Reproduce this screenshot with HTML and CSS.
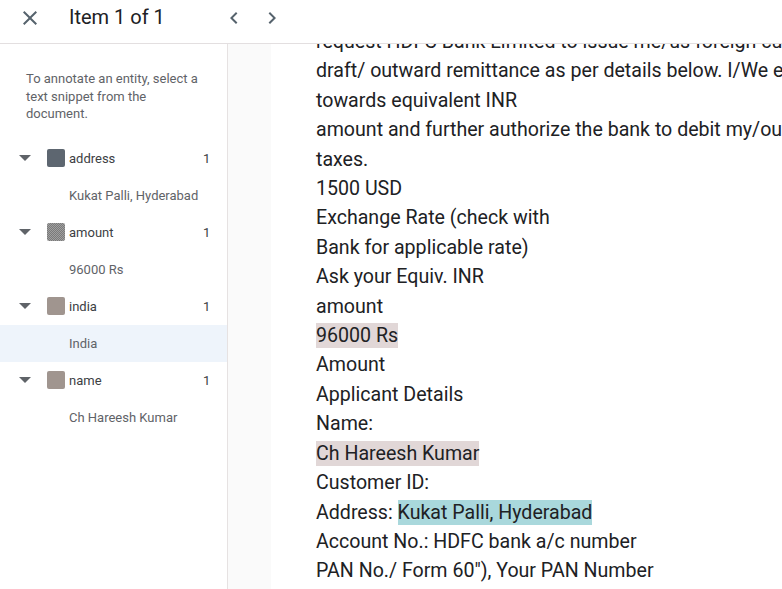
FILE: index.html
```html
<!DOCTYPE html>
<html>
<head>
<meta charset="utf-8">
<link rel="stylesheet" href="styles.css">
</head>
<body>
<div class="app">
  <header class="topbar">
    <svg class="icon close" viewBox="0 0 24 24" width="24" height="24"><path d="M19 6.41L17.59 5 12 10.59 6.41 5 5 6.41 10.59 12 5 17.59 6.41 19 12 13.41 17.59 19 19 17.59 13.41 12z"/></svg>
    <span class="title">Item 1 of 1</span>
    <svg class="icon prev" viewBox="0 0 24 24" width="24" height="24"><path d="M15.41 7.41L14 6l-6 6 6 6 1.41-1.41L10.83 12z"/></svg>
    <svg class="icon next" viewBox="0 0 24 24" width="24" height="24"><path d="M10 6L8.59 7.41 13.17 12l-4.58 4.59L10 18l6-6z"/></svg>
  </header>
  <div class="main">
    <aside class="sidebar">
      <p class="hint">To annotate an entity, select a text snippet from the document.</p>
      <ul class="entities">
        <li class="entity">
          <span class="caret"></span><span class="swatch sw-address"></span><span class="label">address</span><span class="count">1</span>
        </li>
        <li class="value">Kukat Palli, Hyderabad</li>
        <li class="entity">
          <span class="caret"></span><span class="swatch sw-amount"></span><span class="label">amount</span><span class="count">1</span>
        </li>
        <li class="value">96000 Rs</li>
        <li class="entity">
          <span class="caret"></span><span class="swatch sw-india"></span><span class="label">india</span><span class="count">1</span>
        </li>
        <li class="value selected">India</li>
        <li class="entity">
          <span class="caret"></span><span class="swatch sw-name"></span><span class="label">name</span><span class="count">1</span>
        </li>
        <li class="value">Ch Hareesh Kumar</li>
      </ul>
    </aside>
    <div class="gutter"></div>
    <section class="doc">
      <div class="doc-text">
        <div>request HDFC Bank Limited to issue me/us foreign currency demand</div>
        <div>draft/ outward remittance as per details below. I/We enclose a cheque</div>
        <div>towards equivalent INR</div>
        <div>amount and further authorize the bank to debit my/our account for charges and</div>
        <div>taxes.</div>
        <div>1500 USD</div>
        <div>Exchange Rate (check with</div>
        <div>Bank for applicable rate)</div>
        <div>Ask your Equiv. INR</div>
        <div>amount</div>
        <div><span class="hl hl-amount">96000 Rs</span></div>
        <div>Amount</div>
        <div>Applicant Details</div>
        <div>Name:</div>
        <div><span class="hl hl-name">Ch Hareesh Kumar</span></div>
        <div>Customer ID:</div>
        <div>Address: <span class="hl hl-address">Kukat Palli, Hyderabad</span></div>
        <div>Account No.: HDFC bank a/c number</div>
        <div>PAN No./ Form 60"), Your PAN Number</div>
        <div>Date of Birth</div>
      </div>
    </section>
  </div>
</div>
</body>
</html>
```

FILE: styles.css
```css
* { box-sizing: border-box; }
html, body { margin: 0; padding: 0; height: 100%; }
body {
  font-family: Roboto, "Noto Sans", Arial, sans-serif;
  color: #202124;
  background: #fff;
  overflow: hidden;
}
.app {
  width: 782px;
  height: 589px;
  display: flex;
  flex-direction: column;
}
.topbar {
  height: 44px;
  flex: none;
  display: flex;
  align-items: center;
  border-bottom: 1px solid #e3dfe0;
  background: #fff;
  position: relative;
  z-index: 2;
}
.icon { fill: #56636d; flex: none; }
.close { margin-left: 18px; margin-top: -8px; }
.title {
  margin-left: 27px;
  margin-top: -9px;
  font-size: 20px;
  color: #202124;
  width: 153px;
  flex: none;
}
.prev { margin-top: -8px; }
.next { margin-left: 14px; margin-top: -8px; }
.main {
  flex: 1;
  display: flex;
  min-height: 0;
}
.sidebar {
  width: 228px;
  flex: none;
  border-right: 1px solid #e6e2e2;
  padding-top: 26px;
}
.hint {
  margin: 0 0 0 26px;
  width: 180px;
  font-size: 13px;
  line-height: 17.5px;
  color: #5f6368;
}
.entities {
  list-style: none;
  margin: 17px 0 0 0;
  padding: 0;
}
.entity {
  height: 37px;
  display: flex;
  align-items: center;
  font-size: 13px;
  color: #3c4043;
}
.caret {
  width: 0;
  height: 0;
  border-left: 6px solid transparent;
  border-right: 6px solid transparent;
  border-top: 6px solid #5f6368;
  margin-left: 19px;
  margin-right: 16px;
}
.swatch {
  width: 18px;
  height: 18px;
  border-radius: 2px;
  margin-right: 4px;
}
.sw-address { background: #5d6670; }
.sw-amount {
  background-color: #8a8a8a;
  background-image: repeating-conic-gradient(#7a7a7a 0 25%, #a0a0a0 0 50%);
  background-size: 2px 2px;
}
.sw-india { background: #a0958f; }
.sw-name { background: #a0958f; }
.label { flex: 1; }
.count { width: 24px; }
.value {
  height: 37px;
  display: flex;
  align-items: center;
  padding-left: 69px;
  font-size: 13px;
  color: #5f6368;
}
.value.selected { background: #eef4fb; }
.gutter {
  width: 43px;
  flex: none;
  background: #fafafa;
}
.doc {
  flex: 1;
  overflow: hidden;
  padding-left: 45px;
}
.doc-text {
  margin-top: -17px;
  font-size: 19.6px;
  line-height: 29.4px;
  white-space: nowrap;
  color: #202124;
}
.hl { padding: 1px 0; }
.hl-amount, .hl-name { background: #e1d7d7; }
.hl-address { background: #a9d8dc; }
```
